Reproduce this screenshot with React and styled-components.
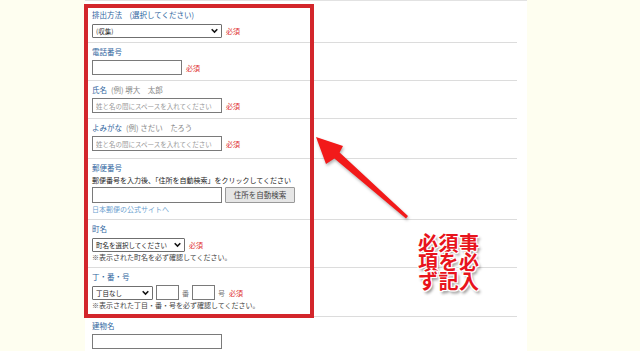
import React from 'react';
import styled, { createGlobalStyle } from 'styled-components';

const GlobalStyle = createGlobalStyle`
  html, body {
    margin: 0;
    padding: 0;
    background: #fefef0;
    font-family: "Noto Sans CJK JP", "Noto Sans", sans-serif;
  }
`;

const Page = styled.div`
  position: relative;
  width: 640px;
  height: 351px;
  overflow: hidden;
`;

const Panel = styled.div`
  position: relative;
  margin-left: 85px;
  width: 442px;
  height: 351px;
  background: #ffffff;
  padding: 0 10px 0 3px;
  box-sizing: border-box;
  border-top: 1px solid #e2e2e2;
`;

const Row = styled.div`
  box-sizing: border-box;
  height: ${({ $h }) => $h}px;
  padding: ${({ $pt }) => $pt || 3}px 0 0 4px;
  border-bottom: ${({ $last }) => ($last ? 'none' : '1px solid #dcdcdc')};
`;

const Label = styled.div`
  font-size: 7.5px;
  line-height: 12px;
  color: #2f66a0;
  white-space: nowrap;
`;

const Example = styled.span`
  color: #888;
  margin-left: 4px;
`;

const Note = styled.div`
  font-size: 7px;
  line-height: ${({ $lh }) => $lh || 11}px;
  color: ${({ $dark }) => ($dark ? '#222' : '#444')};
  white-space: nowrap;
`;

const Field = styled.div`
  display: flex;
  align-items: center;
  gap: ${({ $gap }) => ($gap === undefined ? 3 : $gap)}px;
  margin-top: ${({ $mt }) => ($mt === undefined ? 2 : $mt)}px;
  height: 15px;
`;

const Input = styled.input`
  box-sizing: border-box;
  width: ${({ $w }) => $w}px;
  height: ${({ $hh }) => $hh || 15}px;
  border: 1px solid #7a7a7a;
  border-radius: 0;
  padding: 0 3px;
  margin: 0 0 0 ${({ $ml }) => $ml || 0}px;
  font-family: inherit;
  font-size: 6.5px;
  background: #fff;
  &::placeholder {
    color: #999;
  }
`;

const Select = styled.div`
  position: relative;
  box-sizing: border-box;
  width: ${({ $w }) => $w}px;
  height: 14px;
  border: 1px solid #6f6f6f;
  border-radius: 1px;
  padding: 0 12px 0 3px;
  font-size: 6.5px;
  line-height: 12px;
  color: #222;
  white-space: nowrap;
  overflow: hidden;
  background: #fff;
`;

const Chevron = styled.svg`
  position: absolute;
  right: 3px;
  top: 3px;
  width: 7px;
  height: 6px;
`;

const Required = styled.span`
  font-size: 7px;
  color: #e0322f;
  margin-left: 1px;
`;

const Unit = styled.span`
  font-size: 7px;
  color: #777;
  margin: 0 3px;
`;

const Button = styled.button`
  box-sizing: border-box;
  height: 16px;
  width: 70px;
  margin: 0;
  padding: 0;
  border: 1px solid #999;
  background: #e6e6e6;
  font-family: inherit;
  font-size: 7.5px;
  color: #444;
  border-radius: 1px;
`;

const Link = styled.a`
  display: block;
  font-size: 7px;
  line-height: 12px;
  color: #6c9fcf;
  text-decoration: none;
  margin-top: 1px;
`;

const Frame = styled.div`
  position: absolute;
  left: 84px;
  top: 4px;
  width: 230px;
  height: 314px;
  box-sizing: border-box;
  border: 4px solid #d3262b;
  pointer-events: none;
`;

const Arrow = styled.svg`
  position: absolute;
  left: 300px;
  top: 120px;
  width: 120px;
  height: 110px;
  filter: drop-shadow(1px 2px 1.5px rgba(0, 0, 0, 0.3));
`;

const Callout = styled.div`
  position: absolute;
  left: 418px;
  top: 233px;
  font-size: 20px;
  font-weight: 700;
  line-height: 19px;
  color: #e8141c;
  letter-spacing: 0.5px;
  text-shadow:
    1px 0 0 #fff, -1px 0 0 #fff, 0 1px 0 #fff, 0 -1px 0 #fff,
    1px 1px 0 #fff, -1px -1px 0 #fff, 1px -1px 0 #fff, -1px 1px 0 #fff,
    2px 3px 3px rgba(0, 0, 0, 0.45);
`;

const SelectBox = ({ w, children }) => (
  <Select $w={w}>
    {children}
    <Chevron viewBox="0 0 10 8">
      <path d="M1 1.5 L5 5.5 L9 1.5" fill="none" stroke="#111" strokeWidth="2.2" />
    </Chevron>
  </Select>
);

const NAME_HINT = '姓と名の間にスペースを入れてください';

export default function App() {
  return (
    <Page>
      <GlobalStyle />
      <Panel>
        <Row $h={42} $pt={8}>
          <Label>排出方法　(選択してください)</Label>
          <Field>
            <SelectBox w={130}>(収集)</SelectBox>
            <Required>必須</Required>
          </Field>
        </Row>
        <Row $h={38}>
          <Label>電話番号</Label>
          <Field>
            <Input $w={90} />
            <Required>必須</Required>
          </Field>
        </Row>
        <Row $h={38}>
          <Label>
            氏名<Example>(例) 堺大　太郎</Example>
          </Label>
          <Field>
            <Input $w={130} placeholder={NAME_HINT} />
            <Required>必須</Required>
          </Field>
        </Row>
        <Row $h={40}>
          <Label>
            よみがな<Example>(例) さだい　たろう</Example>
          </Label>
          <Field>
            <Input $w={130} placeholder={NAME_HINT} />
            <Required>必須</Required>
          </Field>
        </Row>
        <Row $h={61}>
          <Label>郵便番号</Label>
          <Note $lh={12} $dark>郵便番号を入力後、「住所を自動検索」をクリックしてください</Note>
          <Field $mt={1}>
            <Input $w={130} $hh={16} />
            <Button>住所を自動検索</Button>
          </Field>
          <Link href="#">日本郵便の公式サイトへ</Link>
        </Row>
        <Row $h={48}>
          <Label>町名</Label>
          <Field>
            <SelectBox w={93}>町名を選択してください</SelectBox>
            <Required>必須</Required>
          </Field>
          <Note>※表示された町名を必ず確認してください。</Note>
        </Row>
        <Row $h={49}>
          <Label>丁・番・号</Label>
          <Field $gap={0}>
            <SelectBox w={61}>丁目なし</SelectBox>
            <Input $w={23} $ml={3} />
            <Unit>番</Unit>
            <Input $w={23} />
            <Unit>号</Unit>
            <Required>必須</Required>
          </Field>
          <Note>※表示された丁目・番・号を必ず確認してください。</Note>
        </Row>
        <Row $h={40} $last>
          <Label>建物名</Label>
          <Field>
            <Input $w={130} />
          </Field>
        </Row>
      </Panel>
      <Frame />
      <Arrow viewBox="300 120 120 110">
        <polygon
          points="316,137 343,146 339.6,152.5 408,216 406,218.5 334.4,158.5 326,164"
          fill="#f21a1a"
        />
      </Arrow>
      <Callout>
        <div>必須事</div>
        <div>項を必</div>
        <div>ず記入</div>
      </Callout>
    </Page>
  );
}
